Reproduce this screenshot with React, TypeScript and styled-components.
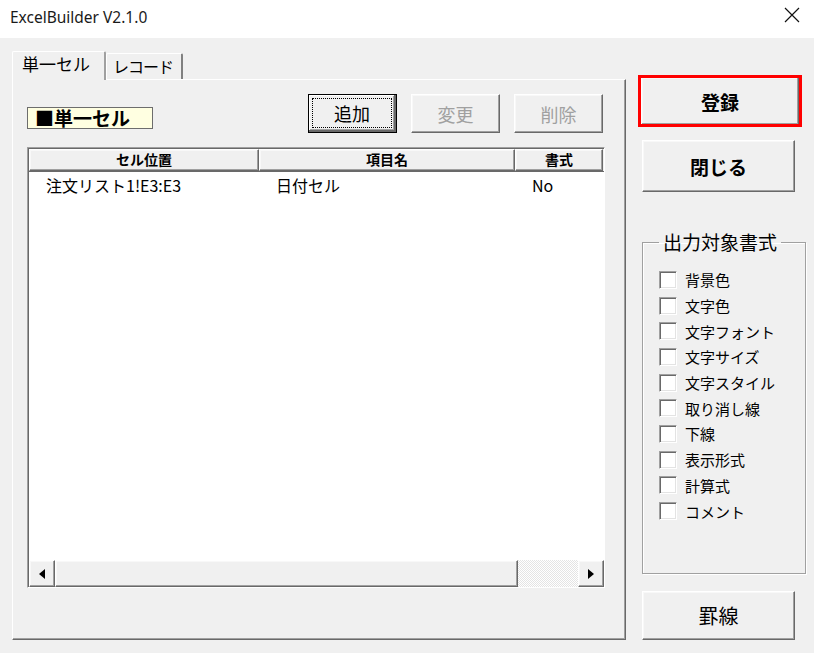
import styled, { createGlobalStyle, css } from 'styled-components';

const GlobalStyle = createGlobalStyle`
  body {
    margin: 0;
    background: #f0f0f0;
    font-family: 'Noto Sans CJK JP', 'Noto Sans', sans-serif;
    color: #000;
  }
`;

const FORMATS = [
  '背景色',
  '文字色',
  '文字フォント',
  '文字サイズ',
  '文字スタイル',
  '取り消し線',
  '下線',
  '表示形式',
  '計算式',
  'コメント',
];

const raised = css`
  border: 1px solid;
  border-color: #ffffff #696969 #696969 #ffffff;
  box-shadow: inset -1px -1px #a0a0a0, inset 1px 1px #f8f8f8;
`;

const App = () => {
  return (
    <Window>
      <GlobalStyle />
      <TitleBar>
        <Title>ExcelBuilder V2.1.0</Title>
        <CloseIcon width="16" height="16" viewBox="0 0 16 16">
          <path d="M1 1 L15 15 M15 1 L1 15" stroke="#111" strokeWidth="1.2" />
        </CloseIcon>
      </TitleBar>
      <Body>
        <TabControl>
          <TabStrip>
            <Tab $active>単一セル</Tab>
            <Tab>レコード</Tab>
          </TabStrip>
          <TabPanel>
            <Toolbar>
              <Badge>■単一セル</Badge>
              <ButtonGroup>
                <PushButton $default>
                  <Focus>追加</Focus>
                </PushButton>
                <PushButton disabled>変更</PushButton>
                <PushButton disabled>削除</PushButton>
              </ButtonGroup>
            </Toolbar>
            <ListView>
              <HeaderRow>
                <HeaderCell $width={230}>セル位置</HeaderCell>
                <HeaderCell $width={256}>項目名</HeaderCell>
                <HeaderCell $width={88}>書式</HeaderCell>
              </HeaderRow>
              <ListBody>
                <Row>
                  <Cell $width={230}>注文リスト1!E3:E3</Cell>
                  <Cell $width={256}>日付セル</Cell>
                  <Cell $width={88}>No</Cell>
                </Row>
              </ListBody>
              <HScroll>
                <ArrowButton>
                  <svg width="6" height="10" viewBox="0 0 6 10">
                    <path d="M6 0 L0 5 L6 10 Z" fill="#000" />
                  </svg>
                </ArrowButton>
                <Thumb />
                <Track />
                <ArrowButton>
                  <svg width="6" height="10" viewBox="0 0 6 10">
                    <path d="M0 0 L6 5 L0 10 Z" fill="#000" />
                  </svg>
                </ArrowButton>
              </HScroll>
            </ListView>
          </TabPanel>
        </TabControl>
        <SideColumn>
          <Highlight>
            <SideButton $bold>登録</SideButton>
          </Highlight>
          <SideButton $bold $gap={13}>
            閉じる
          </SideButton>
          <GroupBox>
            <Legend>出力対象書式</Legend>
            <CheckList>
              {FORMATS.map((f) => (
                <CheckRow key={f}>
                  <CheckBox />
                  <CheckLabel>{f}</CheckLabel>
                </CheckRow>
              ))}
            </CheckList>
          </GroupBox>
          <SideButton $gap={17} $height={49}>
            罫線
          </SideButton>
        </SideColumn>
      </Body>
    </Window>
  );
};

const Window = styled.div`
  width: 814px;
  height: 653px;
  background: #f0f0f0;
  display: flex;
  flex-direction: column;
  overflow: hidden;
`;

const TitleBar = styled.div`
  height: 38px;
  background: #ffffff;
  display: flex;
  justify-content: space-between;
  align-items: flex-start;
  padding: 3px 14px 0 10px;
  box-sizing: border-box;
`;

const Title = styled.div`
  font-family: 'Noto Sans', sans-serif;
  font-size: 15.5px;
  line-height: 28px;
  color: #1a1a1a;
`;

const CloseIcon = styled.svg`
  margin-top: 4px;
`;

const Body = styled.div`
  display: flex;
  align-items: flex-start;
  padding: 13px 0 0 12px;
`;

const TabControl = styled.div`
  display: flex;
  flex-direction: column;
  width: 614px;
`;

const TabStrip = styled.div`
  display: flex;
  align-items: flex-end;
  height: 28px;
  position: relative;
  z-index: 1;
`;

const Tab = styled.div<{ $active?: boolean }>`
  box-sizing: border-box;
  width: ${(p) => (p.$active ? 94 : 77)}px;
  height: ${(p) => (p.$active ? 29 : 26)}px;
  margin-bottom: ${(p) => (p.$active ? -1 : 0)}px;
  background: #f0f0f0;
  border-top: 1px solid #ffffff;
  border-left: 1px solid #ffffff;
  border-right: 2px solid;
  border-right-color: ${(p) => (p.$active ? '#a0a0a0' : '#808080')};
  border-radius: 2px 2px 0 0;
  font-size: ${(p) => (p.$active ? 17 : 16)}px;
  letter-spacing: ${(p) => (p.$active ? 0 : -1)}px;
  line-height: 24px;
  padding-left: ${(p) => (p.$active ? 9 : 6)}px;
  white-space: nowrap;
  color: #000;
`;

const TabPanel = styled.div`
  box-sizing: border-box;
  height: 561px;
  border: 1px solid;
  border-color: #ffffff #696969 #696969 #ffffff;
  box-shadow: inset -1px -1px #a0a0a0;
  padding: 14px 0 0 14px;
`;

const Toolbar = styled.div`
  display: flex;
  align-items: flex-start;
  height: 39px;
`;

const Badge = styled.div`
  box-sizing: border-box;
  margin-top: 13px;
  width: 126px;
  height: 22px;
  background: #ffffe1;
  border: 1px solid #6d6d6d;
  font-size: 19px;
  font-weight: 700;
  line-height: 20px;
  padding-left: 7px;
  white-space: nowrap;
`;

const ButtonGroup = styled.div`
  display: flex;
  gap: 14px;
  margin-left: 155px;
`;

const PushButton = styled.button<{ $default?: boolean }>`
  box-sizing: border-box;
  width: 89px;
  height: 39px;
  background: #f0f0f0;
  font-family: 'Noto Sans CJK JP', sans-serif;
  font-size: 18px;
  padding: 0;
  color: ${(p) => (p.disabled ? '#a0a0a0' : '#000')};
  ${raised}
  ${(p) =>
    p.$default &&
    css`
      border: 1px solid #000;
      box-shadow: inset -2px -2px #696969, inset 1px 1px #ffffff, inset -3px -3px #a0a0a0;
    `}
`;

const Focus = styled.span`
  display: flex;
  align-items: center;
  justify-content: center;
  margin: 4px 5px 5px 4px;
  height: 28px;
  outline: 1px dotted #000;
`;

const ListView = styled.div`
  box-sizing: border-box;
  margin-top: 14px;
  width: 578px;
  height: 441px;
  border: 1px solid;
  border-color: #a0a0a0 #ffffff #ffffff #a0a0a0;
  box-shadow: inset 1px 1px #696969;
  padding: 1px 0 0 1px;
  display: flex;
  flex-direction: column;
  background: #ffffff;
`;

const HeaderRow = styled.div`
  display: flex;
  height: 22px;
  border-bottom: 1px solid #696969;
  background: #f0f0f0;
`;

const HeaderCell = styled.div<{ $width: number }>`
  box-sizing: border-box;
  width: ${(p) => p.$width}px;
  ${raised}
  text-align: center;
  font-size: 14px;
  font-weight: 700;
  line-height: 19px;
`;

const ListBody = styled.div`
  flex: 1;
  background: #ffffff;
`;

const Row = styled.div`
  display: flex;
  height: 26px;
  align-items: center;
`;

const Cell = styled.div<{ $width: number }>`
  width: ${(p) => p.$width}px;
  box-sizing: border-box;
  padding-left: 17px;
  font-size: 16px;
  white-space: nowrap;
`;

const HScroll = styled.div`
  display: flex;
  height: 27px;
  background: #f0f0f0;
`;

const ArrowButton = styled.div`
  box-sizing: border-box;
  width: 26px;
  ${raised}
  display: flex;
  align-items: center;
  justify-content: center;
`;

const Thumb = styled.div`
  box-sizing: border-box;
  width: 463px;
  ${raised}
`;

const Track = styled.div`
  flex: 1;
  background: repeating-conic-gradient(#ffffff 0 25%, #e4e4e4 0 50%) 0 0 / 2px 2px;
`;

const SideColumn = styled.div`
  display: flex;
  flex-direction: column;
  margin-left: 12px;
  margin-top: 24px;
  width: 168px;
`;

const Highlight = styled.div`
  box-sizing: border-box;
  width: 164px;
  height: 52px;
  border: 3px solid #ff0000;
  padding: 0 4px 0 0;
  overflow: hidden;
`;

const SideButton = styled.button<{ $bold?: boolean; $gap?: number; $height?: number }>`
  box-sizing: border-box;
  width: 153px;
  height: ${(p) => p.$height ?? 52}px;
  margin: ${(p) => p.$gap ?? 0}px 0 0 ${(p) => (p.$gap ? 4 : 0)}px;
  background: #f0f0f0;
  ${raised}
  font-family: 'Noto Sans CJK JP', sans-serif;
  font-size: ${(p) => (p.$bold ? 19 : 20)}px;
  font-weight: ${(p) => (p.$bold ? 700 : 400)};
  color: #000;
  padding: 0;
  ${Highlight} & {
    width: 158px;
    height: 48px;
    margin-top: -1px;
  }
`;

const GroupBox = styled.fieldset`
  box-sizing: border-box;
  margin: 36px 0 0 4px;
  width: 164px;
  height: 346px;
  border: 1px solid #a0a0a0;
  box-shadow: 1px 1px #ffffff, inset 1px 1px #ffffff;
  padding: 0 0 0 16px;
`;

const Legend = styled.legend`
  font-size: 19px;
  padding: 0 4px;
  line-height: 28px;
`;

const CheckList = styled.div`
  display: flex;
  flex-direction: column;
  padding-top: 11px;
`;

const CheckRow = styled.div`
  display: flex;
  align-items: center;
  height: 25.7px;
  gap: 8px;
`;

const CheckBox = styled.span`
  box-sizing: border-box;
  width: 18px;
  height: 18px;
  background: #ffffff;
  border: 1px solid;
  border-color: #a0a0a0 #ffffff #ffffff #a0a0a0;
  box-shadow: inset 1px 1px #696969, inset -1px -1px #e3e3e3;
`;

const CheckLabel = styled.span`
  font-size: 15px;
  white-space: nowrap;
`;

export default App;
